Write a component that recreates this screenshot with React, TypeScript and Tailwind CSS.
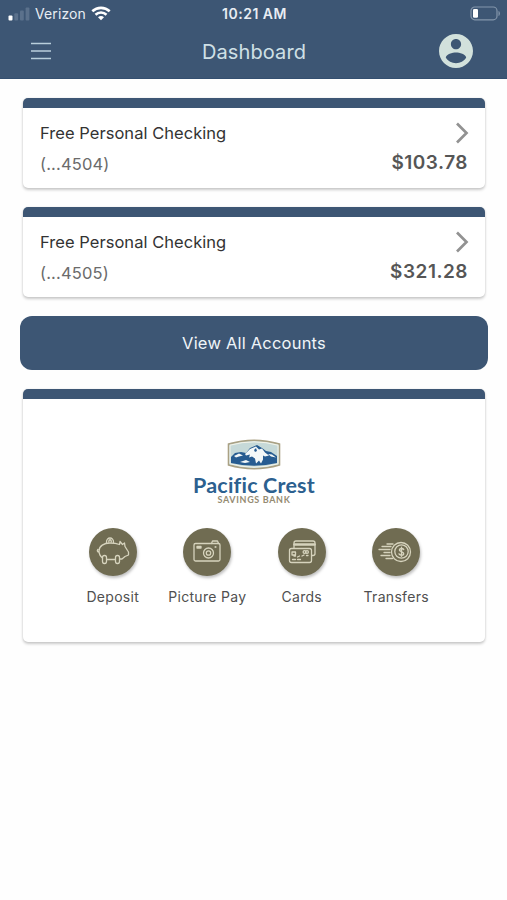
import type { ReactNode } from "react";

const font = "font-['Inter','Liberation_Sans',sans-serif]";

function StatusBar() {
  return (
    <div className="grid h-[27px] grid-cols-[1fr_auto_1fr] items-center pl-2 pr-[6px] text-[#e8edf3]">
      <div className="flex items-center">
        <svg width="22" height="14" viewBox="0 0 22 14" className="shrink-0">
          <rect x="0.5" y="8.5" width="4" height="5" rx="1" fill="#fff" />
          <rect x="6.3" y="6.3" width="3.8" height="7.2" rx="1" fill="#5b718c" />
          <rect x="12" y="3.4" width="3.8" height="10.1" rx="1" fill="#5b718c" />
          <rect x="17.6" y="0.5" width="3.8" height="13" rx="1" fill="#5b718c" />
        </svg>
        <span className="ml-[5px] w-[51px] whitespace-nowrap text-[14px] leading-5 tracking-[0.1px]">Verizon</span>
        <svg width="20" height="15" viewBox="0 0 20 15" className="ml-[5px] shrink-0" fill="none" stroke="#fff" strokeWidth="2.6">
          <path d="M1.3 5.3C6.2 .7 13.8 .7 18.7 5.3" />
          <path d="M4.5 8.7c3.1-2.9 7.9-2.9 11 0" />
          <path d="M7 11.2c1.8-1.5 4.2-1.5 6 0L10 14.2z" fill="#fff" stroke="none" />
        </svg>
      </div>
      <span className="whitespace-nowrap text-[14px] font-semibold leading-5 tracking-[0.5px]">10:21 AM</span>
      <svg width="31" height="15" viewBox="0 0 31 15" className="justify-self-end">
        <rect x="1" y="1" width="26" height="12.8" rx="3.8" fill="none" stroke="#8496ab" strokeWidth="1.2" />
        <rect x="3" y="3" width="5" height="8.8" rx="1.3" fill="#fff" />
        <path d="M28.5 5v5c1.9-.6 1.9-4.4 0-5z" fill="#8496ab" />
      </svg>
    </div>
  );
}

function Header() {
  return (
    <header className="h-[79px] border-b border-[#344f70] bg-[#3d5674]">
      <StatusBar />
      <div className="grid h-[49px] grid-cols-[1fr_auto_1fr] items-center pl-[31px] pr-[34px]">
        <svg width="20" height="18" viewBox="0 0 20 18" stroke="#b9cedb" strokeWidth="1.4" className="-mt-[1px]">
          <path d="M0 1.5h20M0 9h20M0 16.5h20" />
        </svg>
        <h1 className="ml-[4px] mt-[1px] whitespace-nowrap text-[20px] leading-6 tracking-[0.1px] text-[#cfe0e6]">Dashboard</h1>
        <svg width="34" height="34" viewBox="2 2 20 20" className="-mt-[1px] justify-self-end" fill="#d2e1dc">
          <path d="M12 2C6.48 2 2 6.48 2 12s4.48 10 10 10 10-4.480 10-10S17.520 2 12 2zm0 3c1.660 0 3 1.340 3 3s-1.340 3-3 3-3-1.340-3-3 1.340-3 3-3zm0 14.200c-2.500 0-4.710-1.280-6-3.220.030-1.990 4-3.080 6-3.080 1.990 0 5.970 1.090 6 3.080-1.290 1.940-3.500 3.220-6 3.220z" />
        </svg>
      </div>
    </header>
  );
}

function Card({ className, children }: { className: string; children: ReactNode }) {
  return (
    <section className={`mx-[3px] overflow-hidden rounded-[5px] border-t-[10px] border-[#3d5674] bg-white shadow-[0_2px_3px_rgba(0,0,0,0.2),0_0_2px_rgba(0,0,0,0.1)] ${className}`}>
      {children}
    </section>
  );
}

function Account({ number, balance }: { number: string; balance: string }) {
  return (
    <Card className="h-[90px]">
      <div className="flex h-full flex-col pl-[17px] pr-[16px] pt-[13px]">
        <div className="flex h-6 items-center justify-between">
          <span className="text-[16.5px] leading-6 tracking-[0.04px] text-[#333]">Free Personal Checking</span>
          <svg width="14" height="22" viewBox="0 0 14 22" fill="none" stroke="#929292" strokeWidth="2.7">
            <path d="M2 1.500l9.500 9.500L2 20.500" />
          </svg>
        </div>
        <div className="mt-[6.5px] flex h-6 items-center justify-between">
          <span className="text-[16.5px] leading-6 tracking-[0.15px] text-[#6b6b6b]">({"..."}{number})</span>
          <span className="-mt-[1px] mr-[1px] text-[19px] font-semibold leading-6 tracking-[0.5px] text-[#565656]">{balance}</span>
        </div>
      </div>
    </Card>
  );
}

function Logo() {
  return (
    <div className="flex flex-col items-center">
      <svg width="54" height="31" viewBox="0 0 54 31">
        <path d="M1.500 5Q27-2.500 52.500 5v21Q27 33.500 1.500 26z" fill="#c6d9d8" stroke="#aaa184" strokeWidth="1.6" />
        <path d="M3 6.200Q27-.5 51 6.200v18.600Q27 31.500 3 24.800z" fill="none" stroke="#f3f3e8" strokeWidth="1" />
        <path d="M4 18l4-4 6-1 5 1 4-5 7-3 5 3 4 3 5 1 6 4v7Q27 29.500 4 24z" fill="#275c91" />
        <path d="M18 15l5-5 6-2.500 3 3 3-1 3 4 4 3-4 1-2-1v4l-2 4-2-3-3 3-1-5-3-2-3 1 1-3-4 1z" fill="#f4f8f8" />
        <path d="M7 17l5-2.500 4 2-4 1-3 1zM41 15l4 .5 4 3-5-1zM13 23l6-2 4 2-5 1z" fill="#f4f8f8" />
        <path d="M27 11l2-2 1 3-2 1z" fill="#275c91" />
      </svg>
      <span className="mt-[5px] whitespace-nowrap font-['Lato',sans-serif] text-[21.500px] font-bold leading-[20px] tracking-[0.2px] text-[#2c608f] [font-variant-ligatures:none]">Pacific Crest</span>
      <span className="whitespace-nowrap font-['Lato',sans-serif] text-[9px] font-bold leading-[10px] tracking-[0.65px] text-[#958b72]">SAVINGS BANK</span>
    </div>
  );
}

function PiggyIcon() {
  return (
    <g>
      <path d="M13.500 30c-2.500-2-3.500-4.500-3.500-7 0-5 5-8 11-8 4 0 7 .5 9.500 1.500l.5-3 2.500 3 2-1.500.5 3.500 2.500 4 1 1.500v3l-3.500 1.500-3 2.500h-2M26 31.500h-8M10 24c-1.500 0-2.200-1.500-1.200-2.500" />
      <rect x="13.500" y="27.500" width="4" height="8" rx="1.900" />
      <rect x="26.500" y="27.500" width="4" height="8" rx="1.900" />
      <path d="M17.500 14.500c-.5-6 7.500-6 7 0M19.800 14c0-3 2.500-3 2.500 0" />
    </g>
  );
}

function CameraIcon() {
  return (
    <g>
      <rect x="11" y="15.500" width="26" height="17.500" rx="1.500" />
      <path d="M28.500 15.500l1-2.500h5l1 2.500M14 18.500h4v1.500h-4z" />
      <circle cx="25.500" cy="25" r="5" />
      <circle cx="25.500" cy="25" r="2.200" />
      <circle cx="32.500" cy="19" r=".4" />
    </g>
  );
}

function CardsIcon() {
  return (
    <g>
      <path d="M16 20v-5q0-2 2-2h17q2 0 2 2v10.500q0 2-2 2h-1" />
      <path d="M16.500 16.500h20" strokeWidth="2.600" />
      <rect x="11.500" y="20.500" width="22" height="14" rx="2" />
      <path d="M14 24h3.500v3H14zM16 28h1.500M19.500 29l2-1M24 28l2-1M28.500 27.500h1.500M14.500 31.500h3M19.500 31.500h3" />
      <circle cx="26.500" cy="24" r="1.400" />
      <circle cx="29" cy="24" r="1.400" />
    </g>
  );
}

function CoinIcon() {
  return (
    <g>
      <ellipse cx="29" cy="24" rx="9.500" ry="9.500" />
      <circle cx="29.500" cy="23.500" r="6.700" />
      <path d="M10 18.500h9M7 21.500h11M12 24.500h6M9 27.500h9M14 30.500h6.500M15 16h6" />
      <path d="M31.700 21.500c-1-1.500-4.300-1.300-4.300.5s4.300 1.500 4.300 3.700-3.700 1.800-4.700.2M29.500 19.300v8.900" strokeWidth="1.400" />
    </g>
  );
}

function Action({ label, children }: { label: string; children: ReactNode }) {
  return (
    <div className="flex flex-col items-center">
      <div className="size-12 rounded-full bg-[#706c52] shadow-[1px_2px_3px_rgba(0,0,0,0.25)]">
        <svg width="48" height="48" viewBox="0 0 48 48" fill="none" stroke="#d6d3bd" strokeWidth="1.3" strokeLinejoin="round" strokeLinecap="round">
          {children}
        </svg>
      </div>
      <span className="mt-[11px] whitespace-nowrap text-[14px] leading-5 tracking-[0.3px] text-[#505050]">{label}</span>
    </div>
  );
}

export default function App() {
  return (
    <div className={`min-h-[900px] w-full bg-[#fefefe] ${font}`}>
      <Header />
      <main className="flex flex-col gap-[19px] pl-5 pr-[19px] pt-[19px]">
        <Account number="4504" balance="$103.78" />
        <Account number="4505" balance="$321.28" />
        <button className="h-[54px] rounded-xl bg-[#3d5674] text-[16.5px] leading-6 tracking-[0.2px] text-[#eff4f8]">
          View All Accounts
        </button>
        <Card className="h-[253px]">
          <div className="pt-[40px]">
            <Logo />
          </div>
          <div className="ml-[42.5px] mt-[23px] grid w-[378px] grid-cols-4">
            <Action label="Deposit"><PiggyIcon /></Action>
            <Action label="Picture Pay"><CameraIcon /></Action>
            <Action label="Cards"><CardsIcon /></Action>
            <Action label="Transfers"><CoinIcon /></Action>
          </div>
        </Card>
      </main>
    </div>
  );
}
